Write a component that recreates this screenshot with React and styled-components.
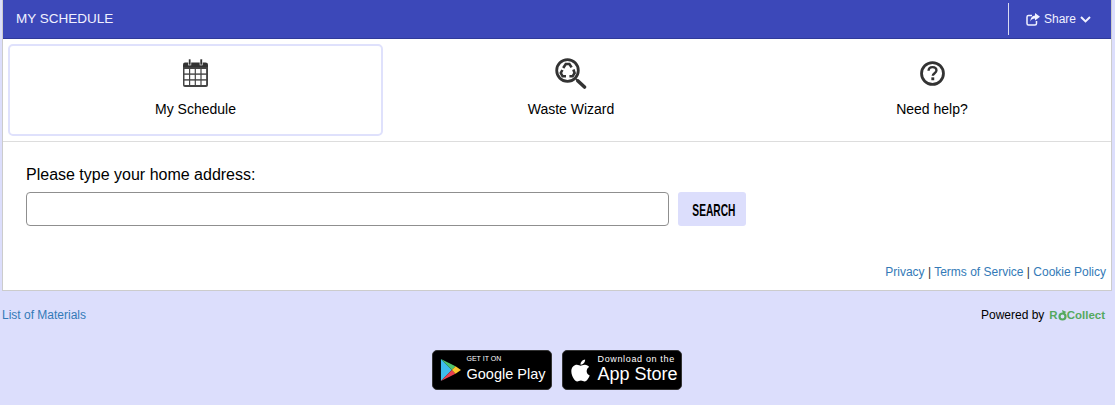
import { FaApple } from 'react-icons/fa'
import styled, { createGlobalStyle } from 'styled-components'

const GlobalStyle = createGlobalStyle`
    html, body {
        margin: 0;
        background-color: #dcdefc;
        font-family: "Liberation Sans", Arial, sans-serif;
    }
`

function CalendarIcon () {
    return (
        <svg width="25" height="28" viewBox="0 0 25 28">
            <path d="M0 5.5 Q0 3.5 2 3.5 H22.5 Q25 3.5 25 5.5 V8 H0 Z" fill="#333" />
            <rect x="5.5" y="0" width="2.4" height="6" fill="#333" stroke="#fff" strokeWidth="0.6" />
            <rect x="17" y="0" width="2.4" height="6" fill="#333" stroke="#fff" strokeWidth="0.6" />
            <path d="M0 8 H25 V26 Q25 28 23 28 H2 Q0 28 0 26 Z" fill="#444" />
            {[0, 1, 2].map(row => [0, 1, 2, 3].map(col => (
                <rect
                    key={`${row}-${col}`}
                    x={1.5 + col * 5.7}
                    y={10 + row * 5.8}
                    width="4.5"
                    height="4.4"
                    fill="#fff"
                />
            )))}
        </svg>
    )
}

function WizardIcon () {
    return (
        <svg width="32" height="31" viewBox="0 0 32 31">
            <circle cx="12.5" cy="12.5" r="10.8" fill="none" stroke="#333" strokeWidth="2.8" />
            <path d="M21 21 L23 23" stroke="#333" strokeWidth="1.8" />
            <path d="M23 23 L29.5 29" stroke="#333" strokeWidth="3.6" strokeLinecap="round" />
            <g fill="none" stroke="#333" strokeWidth="2.6">
                <path d="M8.2 10 L10.8 6 H14.4 L16.6 9.4" />
                <path d="M18.4 11.5 L19.6 15 L17.6 18.3 H14.4" />
                <path d="M11 18.3 H7.6 L5.8 15 L7.4 12" />
            </g>
        </svg>
    )
}

function HelpIcon () {
    return (
        <svg width="25" height="25" viewBox="0 0 26 26">
            <circle cx="13" cy="13" r="11.4" fill="none" stroke="#333" strokeWidth="2.9" />
            <path d="M8.9 10.2 C9 7.6 10.8 6.4 13 6.4 C15.4 6.4 17.1 7.8 17.1 9.9 C17.1 12.6 13.3 12.8 13.3 15.4" fill="none" stroke="#333" strokeWidth="2.5" />
            <rect x="11.8" y="17" width="3" height="3" fill="#333" />
        </svg>
    )
}

function ShareIcon () {
    return (
        <svg width="14" height="13" viewBox="0 0 14 13">
            <path d="M6 2.5 H2.5 Q1 2.5 1 4 V10.5 Q1 12 2.5 12 H9 Q10.5 12 10.5 10.5 V8" fill="none" stroke="#f0f1ff" strokeWidth="1.5" />
            <path d="M9 0 L14 3.8 L9 7.6 V5.4 C6.8 5.4 5.2 6.2 4.4 8.4 C4.4 4.8 6.4 2.6 9 2.4 Z" fill="#f0f1ff" />
        </svg>
    )
}

function ChevronIcon () {
    return (
        <svg width="11" height="7" viewBox="0 0 11 7">
            <path d="M1 1 L5.5 5.4 L10 1" fill="none" stroke="#f0f1ff" strokeWidth="2" />
        </svg>
    )
}

function PlayIcon () {
    return (
        <svg width="21" height="24" viewBox="0 0 23 26">
            <polygon points="1,1 1,25 13,13" fill="#3dbdec" />
            <polygon points="1,1 13,13 17,9" fill="#4fc46d" />
            <polygon points="1,25 13,13 17,17" fill="#e8404f" />
            <polygon points="17,9 23,13 17,17 13,13" fill="#fcc72d" />
        </svg>
    )
}

function BrandMark () {
    return (
        <svg width="9" height="11" viewBox="0 0 9 11">
            <circle cx="4.5" cy="6.5" r="3" fill="none" stroke="#55a95f" strokeWidth="2.2" />
            <path d="M4 0 L8.5 2 L5 4 Z" fill="#55a95f" />
        </svg>
    )
}

export default function App () {
    return (
        <Page>
            <GlobalStyle />

            <Panel>
                <Header>
                    <HeaderTitle>MY SCHEDULE</HeaderTitle>
                    <ShareButton>
                        <ShareIcon />
                        Share
                        <ChevronIcon />
                    </ShareButton>
                </Header>

                <Tabs>
                    <Tab $active>
                        <TabIcon><CalendarIcon /></TabIcon>
                        My Schedule
                    </Tab>
                    <Tab>
                        <TabIcon><WizardIcon /></TabIcon>
                        Waste Wizard
                    </Tab>
                    <Tab>
                        <TabIcon><HelpIcon /></TabIcon>
                        Need help?
                    </Tab>
                </Tabs>

                <Body>
                    <AddressLabel htmlFor="address">Please type your home address:</AddressLabel>
                    <SearchRow>
                        <AddressInput id="address" type="text" />
                        <SearchButton><SearchLabel>SEARCH</SearchLabel></SearchButton>
                    </SearchRow>
                    <LegalLinks>
                        <Link href="#">Privacy</Link> | <Link href="#">Terms of Service</Link> | <Link href="#">Cookie Policy</Link>
                    </LegalLinks>
                </Body>
            </Panel>

            <FooterRow>
                <Link href="#">List of Materials</Link>
                <Powered>
                    Powered by
                    <Brand>R<BrandMark />Collect</Brand>
                </Powered>
            </FooterRow>

            <Badges>
                <Badge>
                    <PlayIcon />
                    <BadgeText>
                        <BadgeSmall>GET IT ON</BadgeSmall>
                        <BadgeLarge>Google Play</BadgeLarge>
                    </BadgeText>
                </Badge>
                <Badge $apple>
                    <FaApple size={25} />
                    <BadgeText>
                        <BadgeSmall $wide>Download on the</BadgeSmall>
                        <BadgeLarge $big>App Store</BadgeLarge>
                    </BadgeText>
                </Badge>
            </Badges>
        </Page>
    )
}

const Page = styled.div`
    width: 1115px;
    height: 405px;
    padding: 0 3px 0 2px;
    box-sizing: border-box;
    overflow: hidden;
`

const Panel = styled.div`
    height: 291px;
    box-sizing: border-box;
    background-color: #fff;
    border: 1px solid #ccc;
    border-top: 0;
`

const Header = styled.header`
    height: 39px;
    box-sizing: border-box;
    display: flex;
    align-items: center;
    justify-content: space-between;
    background-color: #3c48b9;
    border-bottom: 1px solid #2f3a99;
`

const HeaderTitle = styled.h1`
    margin: 0 0 2px;
    padding-left: 13px;
    font-size: 13.5px;
    font-weight: 400;
    color: #f0f1ff;
`

const ShareButton = styled.div`
    height: 32px;
    width: 103px;
    box-sizing: border-box;
    display: flex;
    align-items: center;
    gap: 4px;
    padding-left: 17px;
    border-left: 1px solid #d8daf2;
    font-size: 12px;
    color: #f0f1ff;
`

const Tabs = styled.nav`
    height: 103px;
    box-sizing: border-box;
    display: grid;
    grid-template-columns: 375px 376px 1fr;
    padding: 5px 6px 5px 5px;
    border-bottom: 1px solid #ddd;
`

const Tab = styled.div`
    display: flex;
    flex-direction: column;
    align-items: center;
    box-sizing: border-box;
    height: 92px;
    padding-top: 11px;
    font-size: 14px;
    color: #000;
    border: 2px solid ${props => (props.$active ? '#dfe1fc' : 'transparent')};
    border-radius: 5px;
`

const TabIcon = styled.div`
    height: 32px;
    margin-bottom: 12px;
    display: flex;
    align-items: center;
    justify-content: center;
`

const Body = styled.div`
    display: flex;
    flex-direction: column;
    padding: 23px 5px 0 23px;
`

const AddressLabel = styled.label`
    font-size: 16px;
    line-height: 19px;
    color: #000;
    margin-bottom: 8px;
`

const SearchRow = styled.div`
    display: flex;
    gap: 9px;
`

const AddressInput = styled.input`
    width: 643px;
    height: 34px;
    box-sizing: border-box;
    border: 1px solid #8f8f8f;
    border-radius: 4px;
    background-color: #fff;
`

const SearchButton = styled.button`
    width: 68px;
    height: 34px;
    padding: 3px 3px 0 0;
    border: 0;
    border-radius: 3px;
    background-color: #dcdefc;
    color: #000;
    font-family: "Liberation Sans", sans-serif;
    font-size: 17px;
    font-weight: 700;
`

const SearchLabel = styled.span`
    display: inline-block;
    transform: scaleX(0.6);
`

const LegalLinks = styled.div`
    margin-top: 39px;
    text-align: right;
    font-size: 12px;
    color: #333;
`

const Link = styled.a`
    color: #337ab7;
    text-decoration: none;
    font-size: 12px;
`

const FooterRow = styled.div`
    display: flex;
    justify-content: space-between;
    align-items: center;
    height: 18px;
    margin-top: 15px;
    padding-right: 7px;
`

const Powered = styled.div`
    display: flex;
    align-items: center;
    gap: 5px;
    font-size: 12px;
    color: #000;
`

const Brand = styled.span`
    display: flex;
    align-items: center;
    font-size: 11.5px;
    font-weight: 700;
    color: #55a95f;
`

const Badges = styled.div`
    display: flex;
    justify-content: center;
    gap: 10px;
    margin-top: 26px;
    padding-right: 1px;
`

const Badge = styled.div`
    width: 120px;
    height: 40px;
    box-sizing: border-box;
    display: flex;
    align-items: center;
    gap: ${props => (props.$apple ? '5px' : '6px')};
    padding-left: ${props => (props.$apple ? '5px' : '7px')};
    background-color: #000;
    border: 1px solid #333;
    border-radius: 5px;
    color: #fff;
`

const BadgeText = styled.div`
    display: flex;
    flex-direction: column;
    padding-bottom: 1px;
`

const BadgeSmall = styled.span`
    font-size: ${props => (props.$wide ? '9px' : '7px')};
    line-height: 10px;
    letter-spacing: ${props => (props.$wide ? '0.65px' : '0')};
    white-space: nowrap;
`

const BadgeLarge = styled.span`
    font-size: ${props => (props.$big ? '18px' : '14.5px')};
    line-height: 21px;
    white-space: nowrap;
`
